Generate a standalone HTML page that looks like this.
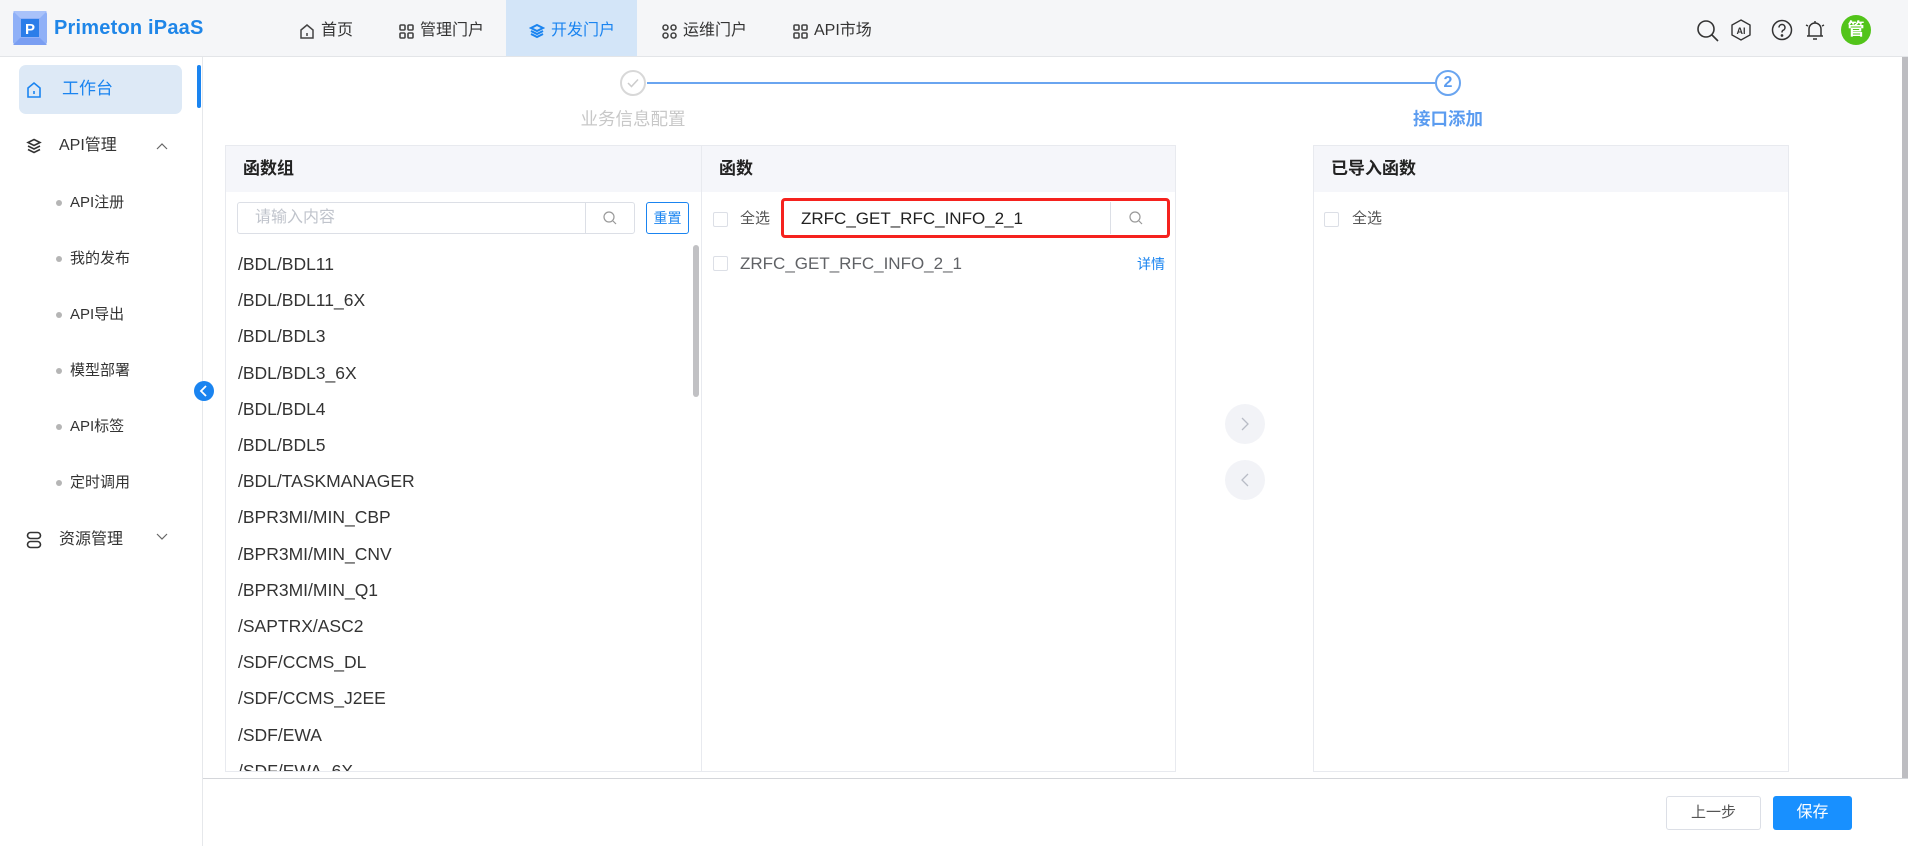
<!DOCTYPE html>
<html><head><meta charset="utf-8">
<style>
*{box-sizing:border-box;margin:0;padding:0}
body{width:1908px;height:846px;overflow:hidden;background:#fff;font-family:"Liberation Sans","Noto Sans CJK SC",sans-serif;color:#333;position:relative}
.a{position:absolute}
.hdr{left:0;top:0;width:1908px;height:57px;background:#f5f6f8;border-bottom:1px solid #e3e5e8}
.nav{top:3px;height:56px;line-height:56px;font-size:16px;color:#333;display:flex;align-items:center;gap:6px}
.side{left:0;top:57px;width:203px;height:789px;background:#fff;border-right:1px solid #e6e8eb}
.mi{font-size:16px;color:#333}
.sub{font-size:15px;color:#333}
.dot{width:6px;height:6px;border-radius:50%;background:#b5b5b5}
.panel{border:1px solid #e8eaef;background:#fff}
.ph{height:46px;background:#f5f6fa;font-weight:bold;font-size:17px;line-height:46px;padding-left:17px;color:#222}
.cb{width:15px;height:15px;border:1px solid #dcdfe6;border-radius:2px;background:#fff}
</style></head><body>
<div class="a hdr"></div>
<svg class="a" style="left:13px;top:11px" width="34" height="34" viewBox="0 0 34 34">
<rect width="34" height="34" rx="3" fill="#8fb0f7"/>
<polygon points="0,0 34,0 27,7 7,7" fill="#a9c2fa"/><polygon points="0,34 34,34 27,27 7,27" fill="#7a9ef2"/>
<rect x="8" y="8" width="18" height="18" fill="#2b7de9"/>
<text x="17" y="23" font-size="15" font-weight="bold" fill="#fff" text-anchor="middle" font-family="Liberation Sans">P</text>
</svg>
<div class="a" style="left:54px;top:16px;font-size:20px;line-height:24px;font-weight:bold;color:#1f86e8;letter-spacing:0.2px">Primeton iPaaS</div>
<div class="a" style="left:506px;top:0;width:131px;height:56px;background:#d3e5f8"></div>
<div class="a nav" style="left:299px"><svg width="16" height="17" viewBox="0 0 16 17"><path d="M2 7L8 2l6 5v8H2z M8 10v3" fill="none" stroke="#444" stroke-width="1.5"/></svg><span>首页</span></div>
<div class="a nav" style="left:399px"><svg width="15" height="15" viewBox="0 0 15 15" fill="none" stroke="#444" stroke-width="1.6"><rect x="1" y="1" width="5" height="5" rx="1"/><rect x="9" y="1" width="5" height="5" rx="1"/><rect x="1" y="9" width="5" height="5" rx="1"/><rect x="9" y="9" width="5" height="5" rx="1"/></svg><span>管理门户</span></div>
<div class="a nav" style="left:529px;color:#1a84f0"><svg width="16" height="16" viewBox="0 0 16 16" fill="none" stroke="#1a84f0" stroke-width="2"><path d="M8 2l6 3-6 3-6-3z M2 8l6 3 6-3 M2 11l6 3 6-3"/></svg><span>开发门户</span></div>
<div class="a nav" style="left:662px"><svg width="15" height="15" viewBox="0 0 15 15" fill="none" stroke="#444" stroke-width="1.6"><circle cx="3.5" cy="3.5" r="2.5"/><circle cx="11.5" cy="3.5" r="2.5"/><circle cx="3.5" cy="11.5" r="2.5"/><circle cx="11.5" cy="11.5" r="2.5"/></svg><span>运维门户</span></div>
<div class="a nav" style="left:793px"><svg width="15" height="15" viewBox="0 0 15 15" fill="none" stroke="#444" stroke-width="1.6"><rect x="1" y="1" width="5" height="5" rx="1"/><rect x="9" y="1" width="5" height="5" rx="1"/><rect x="1" y="9" width="5" height="5" rx="1"/><rect x="9" y="9" width="5" height="5" rx="1"/></svg><span>API市场</span></div>
<svg class="a" style="left:1696px;top:19px" width="24" height="24" viewBox="0 0 24 24" fill="none" stroke="#333" stroke-width="1.6"><circle cx="10" cy="10" r="8"/><path d="M16 16l6 6"/></svg>
<svg class="a" style="left:1730px;top:19px" width="22" height="22" viewBox="0 0 22 22" fill="none" stroke="#333" stroke-width="1.4"><path d="M11 1l9 5v10l-9 5-9-5V6z"/><text x="11" y="15" font-size="9" font-weight="bold" fill="#333" stroke="none" text-anchor="middle" font-family="Liberation Sans">AI</text></svg>
<svg class="a" style="left:1771px;top:19px" width="22" height="22" viewBox="0 0 22 22" fill="none" stroke="#333" stroke-width="1.5"><circle cx="11" cy="11" r="9.5"/><path d="M8 8.5a3 3 0 1 1 4 2.8c-1 .5-1 1-1 2.2"/><circle cx="11" cy="16.5" r=".6" fill="#333"/></svg>
<svg class="a" style="left:1803px;top:18px" width="24" height="24" viewBox="0 0 24 24" fill="none" stroke="#333" stroke-width="1.5"><path d="M6 18V11a6 6 0 0 1 12 0v7z M4 18h16 M10 21h4 M12 3v2 M3 7l2 1 M21 7l-2 1"/></svg>
<div class="a" style="left:1841px;top:15px;width:30px;height:30px;border-radius:50%;background:#52c41a;color:#fff;font-size:17px;font-weight:bold;text-align:center;line-height:30px">管</div>

<div class="a side"></div>
<div class="a" style="left:19px;top:65px;width:163px;height:49px;background:#dde9f6;border-radius:7px"></div>
<div class="a" style="left:197px;top:65px;width:4px;height:43px;background:#1a84f0;border-radius:2px"></div>
<svg class="a" style="left:26px;top:81px" width="16" height="18" viewBox="0 0 16 18" fill="none" stroke="#1a84f0" stroke-width="1.6"><path d="M2 7l6-5 6 5v9H2z M8 10v3"/></svg>
<div class="a" style="left:62px;top:77px;font-size:17px;line-height:24px;color:#1a84f0">工作台</div>
<svg class="a" style="left:26px;top:138px" width="16" height="16" viewBox="0 0 16 16" fill="none" stroke="#333" stroke-width="1.6"><path d="M8 1.5l6 3-6 3-6-3z M2 8l6 3 6-3 M2 11.5l6 3 6-3"/></svg>
<div class="a mi" style="left:59px;top:135px;line-height:22px">API管理</div>
<svg class="a" style="left:156px;top:142px" width="12" height="8" viewBox="0 0 12 8" fill="none" stroke="#666" stroke-width="1.2"><path d="M1 7l5-5 5 5"/></svg>
<div class="a dot" style="left:56px;top:200px"></div><div class="a sub" style="left:70px;top:192px;line-height:22px">API注册</div>
<div class="a dot" style="left:56px;top:256px"></div><div class="a sub" style="left:70px;top:248px;line-height:22px">我的发布</div>
<div class="a dot" style="left:56px;top:312px"></div><div class="a sub" style="left:70px;top:304px;line-height:22px">API导出</div>
<div class="a dot" style="left:56px;top:368px"></div><div class="a sub" style="left:70px;top:360px;line-height:22px">模型部署</div>
<div class="a dot" style="left:56px;top:424px"></div><div class="a sub" style="left:70px;top:416px;line-height:22px">API标签</div>
<div class="a dot" style="left:56px;top:480px"></div><div class="a sub" style="left:70px;top:472px;line-height:22px">定时调用</div>
<svg class="a" style="left:26px;top:531px" width="16" height="18" viewBox="0 0 16 18" fill="none" stroke="#333" stroke-width="1.6"><rect x="1.5" y="1.5" width="13" height="6" rx="3"/><rect x="1.5" y="10.5" width="13" height="6" rx="3"/></svg>
<div class="a mi" style="left:59px;top:529px;line-height:22px">资源管理</div>
<svg class="a" style="left:156px;top:533px" width="12" height="8" viewBox="0 0 12 8" fill="none" stroke="#666" stroke-width="1.2"><path d="M1 1l5 5 5-5"/></svg>
<div class="a" style="left:194px;top:381px;width:20px;height:20px;border-radius:50%;background:#1a84f0"></div>
<svg class="a" style="left:199px;top:385px" width="10" height="12" viewBox="0 0 10 12" fill="none" stroke="#fff" stroke-width="1.8"><path d="M7 1L2 6l5 5"/></svg>

<div class="a" style="left:647px;top:82px;width:788px;height:2px;background:#6aa5f0"></div>
<div class="a" style="left:620px;top:70px;width:26px;height:26px;border-radius:50%;border:2px solid #d8d8d8;background:#fff"></div>
<svg class="a" style="left:626px;top:76px" width="14" height="14" viewBox="0 0 14 14" fill="none" stroke="#ccc" stroke-width="1.5"><path d="M2 7l3.5 3.5L12 3.5"/></svg>
<div class="a" style="left:553px;top:107px;width:160px;text-align:center;font-size:17.5px;line-height:24px;white-space:nowrap;color:#c8c8c8">业务信息配置</div>
<div class="a" style="left:1435px;top:70px;width:26px;height:26px;border-radius:50%;border:2px solid #6aa5f0;background:#fff;color:#5b9cf0;font-weight:bold;font-size:16px;text-align:center;line-height:22px">2</div>
<div class="a" style="left:1388px;top:107px;width:120px;text-align:center;font-size:17.5px;line-height:24px;white-space:nowrap;font-weight:bold;color:#5b9cf0">接口添加</div>

<div class="a panel" style="left:225px;top:145px;width:477px;height:627px;overflow:hidden">
<div class="ph">函数组</div>
</div>
<div class="a" style="left:237px;top:202px;width:398px;height:32px;border:1px solid #dcdfe6;border-radius:3px"></div>
<div class="a" style="left:585px;top:203px;width:1px;height:30px;background:#dcdfe6"></div>
<div class="a" style="left:255px;top:207px;font-size:16px;line-height:22px;color:#c0c4cc">请输入内容</div>
<svg class="a" style="left:603px;top:211px" width="14" height="14" viewBox="0 0 14 14" fill="none" stroke="#999" stroke-width="1.2"><circle cx="6" cy="6" r="5"/><path d="M10 10l3 3"/></svg>
<div class="a" style="left:646px;top:202px;width:43px;height:32px;border:1px solid #1a84f0;border-radius:3px;color:#1a84f0;font-size:14px;text-align:center;line-height:30px">重置</div>
<div class="a" style="left:693px;top:245px;width:6px;height:152px;border-radius:3px;background:#c1c1c4"></div>
<div class="a" style="left:226px;top:240px;width:465px;height:531px;overflow:hidden">
<div style="position:relative;left:12px;top:6px;font-size:17.5px;line-height:36.2px;color:#333">
/BDL/BDL11<br>/BDL/BDL11_6X<br>/BDL/BDL3<br>/BDL/BDL3_6X<br>/BDL/BDL4<br>/BDL/BDL5<br>/BDL/TASKMANAGER<br>/BPR3MI/MIN_CBP<br>/BPR3MI/MIN_CNV<br>/BPR3MI/MIN_Q1<br>/SAPTRX/ASC2<br>/SDF/CCMS_DL<br>/SDF/CCMS_J2EE<br>/SDF/EWA<br>/SDF/EWA_6X
</div></div>

<div class="a panel" style="left:701px;top:145px;width:475px;height:627px"><div class="ph">函数</div></div>
<div class="a cb" style="left:713px;top:212px"></div>
<div class="a" style="left:740px;top:208px;font-size:15px;line-height:22px;color:#555">全选</div>
<div class="a" style="left:781px;top:198px;width:389px;height:40px;border:3px solid #f5221e;border-radius:4px"></div>
<div class="a" style="left:1110px;top:202px;width:1px;height:32px;background:#dcdfe6"></div>
<div class="a" style="left:801px;top:208px;font-size:17px;line-height:22px;color:#222">ZRFC_GET_RFC_INFO_2_1</div>
<svg class="a" style="left:1129px;top:211px" width="14" height="14" viewBox="0 0 14 14" fill="none" stroke="#999" stroke-width="1.2"><circle cx="6" cy="6" r="5"/><path d="M10 10l3 3"/></svg>
<div class="a cb" style="left:713px;top:256px"></div>
<div class="a" style="left:740px;top:253px;font-size:17px;line-height:22px;color:#606266">ZRFC_GET_RFC_INFO_2_1</div>
<div class="a" style="left:1137px;top:254px;font-size:14px;line-height:20px;color:#1a84f0">详情</div>

<div class="a" style="left:1225px;top:404px;width:40px;height:40px;border-radius:50%;background:#f2f3f7"></div>
<svg class="a" style="left:1240px;top:417px" width="10" height="14" viewBox="0 0 10 14" fill="none" stroke="#b8bcc6" stroke-width="1.3"><path d="M2 1l6 6-6 6"/></svg>
<div class="a" style="left:1225px;top:460px;width:40px;height:40px;border-radius:50%;background:#f2f3f7"></div>
<svg class="a" style="left:1240px;top:473px" width="10" height="14" viewBox="0 0 10 14" fill="none" stroke="#b8bcc6" stroke-width="1.3"><path d="M8 1L2 7l6 6"/></svg>

<div class="a panel" style="left:1313px;top:145px;width:476px;height:627px"><div class="ph">已导入函数</div></div>
<div class="a cb" style="left:1324px;top:212px"></div>
<div class="a" style="left:1352px;top:208px;font-size:15px;line-height:22px;color:#555">全选</div>

<div class="a" style="left:1902px;top:57px;width:6px;height:721px;background:#bdbdc1"></div>

<div class="a" style="left:203px;top:778px;width:1705px;height:68px;background:#fff;border-top:1px solid #d4d6da"></div>
<div class="a" style="left:1666px;top:796px;width:95px;height:34px;border:1px solid #dcdfe6;border-radius:3px;font-size:15px;color:#555;text-align:center;line-height:32px">上一步</div>
<div class="a" style="left:1773px;top:796px;width:79px;height:34px;background:#1890ff;border-radius:3px;font-size:16px;color:#fff;text-align:center;line-height:34px">保存</div>
</body></html>
